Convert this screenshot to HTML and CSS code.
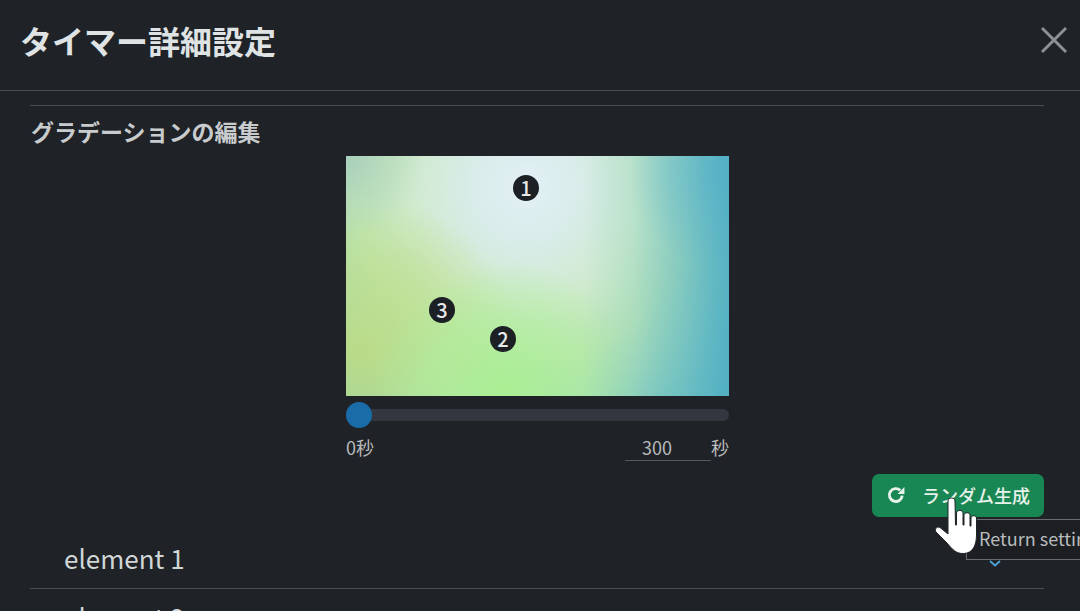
FILE: index.html
```html
<!DOCTYPE html>
<html lang="ja">
<head>
  <meta charset="UTF-8" />
  <title>タイマー詳細設定</title>
  <link rel="stylesheet" href="styles.css">
</head>
<body>
  <div class="modal">
    <div class="modal-header">
      <h1>タイマー詳細設定</h1>
      <svg class="close" viewBox="0 0 28 28" width="28" height="28"><path d="M2 2 L26 26 M26 2 L2 26" stroke="#8d9194" stroke-width="3" fill="none"/></svg>
    </div>
    <div class="modal-body">
      <h2>グラデーションの編集</h2>
      <div class="editor">
        <div class="canvas">
          <span class="pin pin-1">1</span>
          <span class="pin pin-2">2</span>
          <span class="pin pin-3">3</span>
        </div>
        <div class="slider"><span class="thumb"></span></div>
        <div class="range">
          <span>0秒</span>
          <span class="range-end"><span class="range-input">300</span><span>秒</span></span>
        </div>
      </div>
      <div class="actions">
        <button class="random">
          <svg viewBox="0 0 18 18" width="20" height="20"><path d="M14.6 9.6 A5.8 5.8 0 1 1 12.8 4.8" stroke="#e8f3ec" stroke-width="2.6" fill="none"/><path d="M16.6 1.8 V8 H10.4 Z" fill="#e8f3ec"/></svg>
          <span>ランダム生成</span>
        </button>
        <div class="tooltip">Return settings</div>
        <svg class="chevron" viewBox="0 0 14 7" width="14" height="7"><path d="M2 1 L7 5.5 L12 1" stroke="#4aa3d6" stroke-width="1.8" fill="none"/></svg>
        <svg class="hand" viewBox="0 0 44 60" width="44" height="60">
          <path d="M14 4 C14 0 21 0 21 4 L21.5 28 L22.5 28 L22.5 16 C22.5 12.5 29 12.5 29 16 L29 28 L30 28 L30 18 C30 15 36 15 36 18 L36 29 L37 29 L37 21 C37 18 42.5 18 42.5 21 L42.5 38 C42.5 48 39 56 30 56.5 C22 57 18 52 13 46 L2 35 C0 32 3 29 6 30.5 L14 37 Z" fill="#fff" stroke="#1f2227" stroke-width="1"/>
        </svg>
      </div>
      <div class="element-row"><span>element 1</span></div>
      <div class="element-row"><span>element 2</span></div>
    </div>
  </div>
</body>
</html>
```

FILE: styles.css
```css
html, body {
  margin: 0;
  height: 611px;
  overflow: hidden;
}

body {
  background: #1f2227;
  color: #d5d8da;
  font-family: "Noto Sans CJK JP", "Noto Sans", sans-serif;
}

.modal-header {
  display: flex;
  justify-content: space-between;
  align-items: center;
  height: 91px;
  padding: 0 12px 10px 20px;
  box-sizing: border-box;
  border-bottom: 1px solid #4a4d52;
}

.modal-header h1 {
  margin: 0;
  font-size: 32px;
  font-weight: 700;
  line-height: 40px;
  color: #dfe3e4;
}

.modal-body {
  margin: 14px 36px 0 30px;
  border-top: 1px solid #4a4d52;
}

.modal-body h2 {
  margin: 12px 0 11px 1px;
  font-size: 23px;
  font-weight: 700;
  line-height: 27px;
  color: #c9cccd;
}

.editor {
  width: 383px;
  margin-left: 316px;
}

.canvas {
  position: relative;
  height: 240px;
  background:
    linear-gradient(to left, rgba(78, 174, 196, 0.9) 0%, rgba(100, 186, 196, 0.65) 12%, rgba(130, 205, 190, 0.3) 25%, rgba(150, 215, 185, 0) 38%),
    radial-gradient(circle 100px at 100% 6%, rgba(106, 184, 216, 0.9) 0%, rgba(120, 192, 214, 0.5) 50%, rgba(140, 205, 210, 0) 100%),
    radial-gradient(circle 80px at 0% 0%, rgba(168, 205, 190, 0.9) 0%, rgba(175, 212, 185, 0.5) 55%, rgba(185, 220, 180, 0) 100%),
    radial-gradient(circle 135px at 42% 100%, rgba(170, 240, 145, 0.95) 0%, rgba(176, 238, 155, 0.65) 55%, rgba(185, 235, 170, 0) 100%),
    radial-gradient(circle 160px at 4% 82%, rgba(190, 220, 130, 0.9) 0%, rgba(192, 224, 140, 0.6) 60%, rgba(195, 225, 150, 0) 100%),
    radial-gradient(circle 330px at 47% 13%, #e2f0f6 0%, #d9ecea 16%, #cfeacd 36%, #bde4b8 52%, #a0d8bb 66%, #7cc8bf 80%, #55b4bb 100%);
}

.pin {
  position: absolute;
  width: 26px;
  height: 26px;
  margin: -13px 0 0 -13px;
  border-radius: 50%;
  background: #1c1f24;
  color: #e6e8e8;
  font-size: 20px;
  font-weight: 500;
  line-height: 26px;
  text-align: center;
}

.pin-1 { left: 180px; top: 32px; }
.pin-2 { left: 157px; top: 183px; }
.pin-3 { left: 96px; top: 154px; }

.slider {
  position: relative;
  height: 12px;
  margin-top: 13px;
  border-radius: 6px;
  background: #343740;
}

.thumb {
  position: absolute;
  left: 0;
  top: -7px;
  width: 26px;
  height: 26px;
  border-radius: 50%;
  background: #1a6ca8;
}

.range {
  display: flex;
  justify-content: space-between;
  margin-top: 14px;
  font-size: 18px;
  line-height: 25px;
  color: #b8bbbc;
}

.range-end {
  display: flex;
}

.range-input {
  width: 64px;
  padding-right: 22px;
  text-align: center;
  border-bottom: 1px solid #55585c;
}

.actions {
  position: relative;
  display: flex;
  justify-content: flex-end;
  margin-top: 13px;
  margin-bottom: 13px;
}

.random {
  display: flex;
  align-items: center;
  gap: 16px;
  width: 172px;
  height: 43px;
  padding: 0 14px 2px;
  box-sizing: border-box;
  border: none;
  border-radius: 7px;
  background: #198754;
  color: #e6f2ea;
  font-family: inherit;
  font-size: 18px;
  font-weight: 500;
  white-space: nowrap;
}

.tooltip {
  position: absolute;
  left: 936px;
  top: 45px;
  width: 150px;
  height: 41px;
  padding-left: 12px;
  box-sizing: border-box;
  border: 1px solid #6a6d70;
  background: #1c1e22;
  color: #b9bcbd;
  font-size: 18px;
  line-height: 36px;
  white-space: nowrap;
  overflow: hidden;
}

.chevron {
  position: absolute;
  left: 958px;
  top: 86px;
}

.hand {
  position: absolute;
  left: 904px;
  top: 23px;
}

.element-row {
  height: 59px;
  box-sizing: border-box;
  padding: 11px 0 0 34px;
  font-size: 26px;
  line-height: 34px;
  color: #d0d6d6;
  border-bottom: 1px solid #4a4d52;
}

.element-row:last-child {
  border-bottom: none;
}
```
